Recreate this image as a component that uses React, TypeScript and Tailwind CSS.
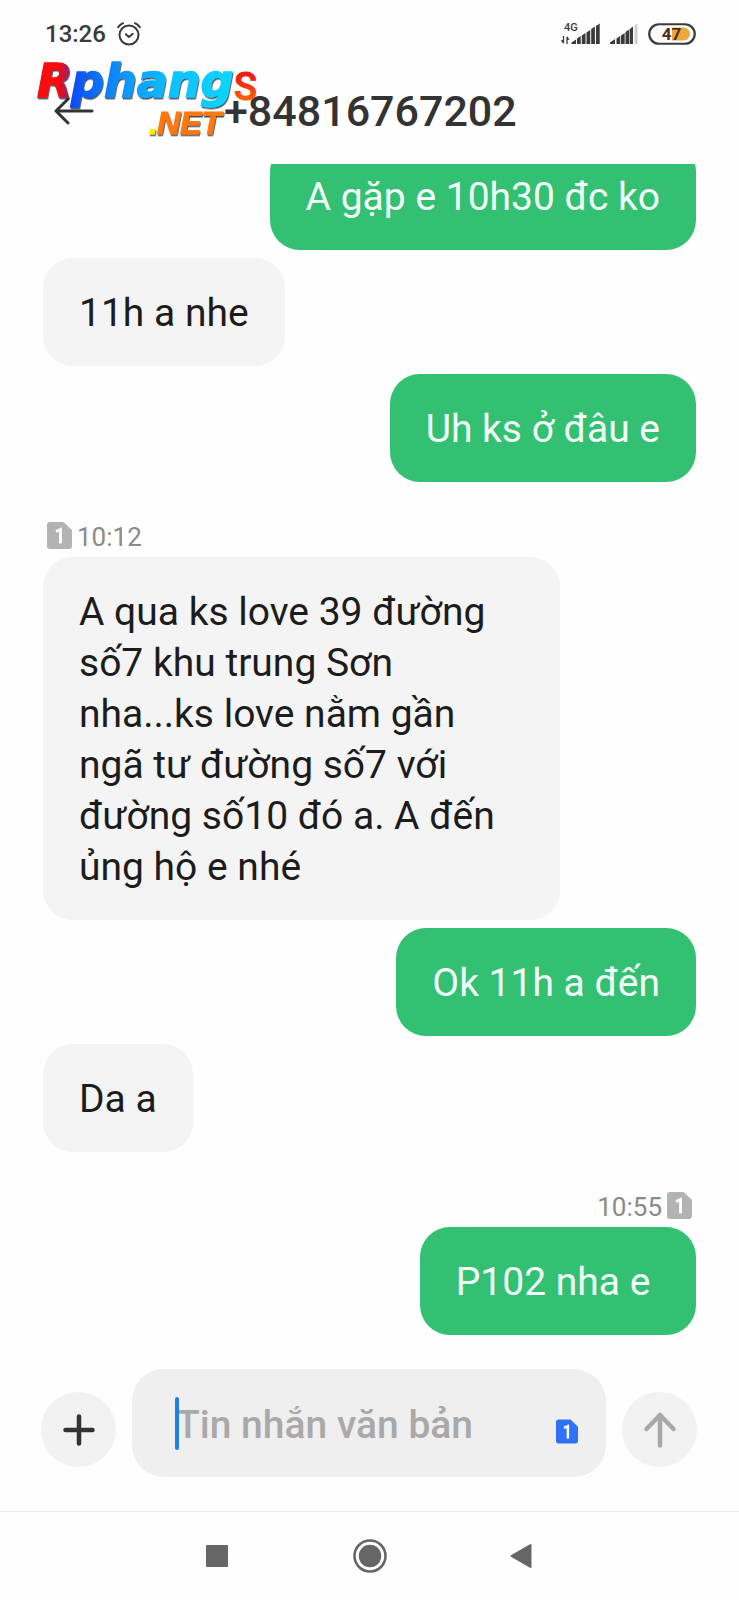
import type { ReactNode } from "react";

type Message = {
  id: number;
  from: "me" | "them";
  text: string;
  time?: string;
};

const messages: Message[] = [
  { id: 1, from: "me", text: "A gặp e 10h30 đc ko" },
  { id: 2, from: "them", text: "11h a nhe" },
  { id: 3, from: "me", text: "Uh ks ở đâu e" },
  {
    id: 4,
    from: "them",
    time: "10:12",
    text: "A qua ks love 39 đường số7 khu trung Sơn nha...ks love nằm gần ngã tư đường số7 với đường số10 đó a. A đến ủng hộ e nhé",
  },
  { id: 5, from: "me", text: "Ok 11h a đến" },
  { id: 6, from: "them", text: "Da a" },
  { id: 7, from: "me", time: "10:55", text: "P102 nha e\u00a0" },
];

function AlarmIcon() {
  return (
    <svg viewBox="0 0 24 24" className="h-6 w-6" fill="none" stroke="#3a3a3a" strokeWidth="2" strokeLinecap="round" strokeLinejoin="round" aria-hidden="true">
      <circle cx="12" cy="13" r="9.5" />
      <path d="M8.8 12.2 12 15l3.8-3.2" />
      <path d="M1.2 5.2Q3.2 2.6 6 1.2M22.8 5.2Q20.8 2.6 18 1.2" />
    </svg>
  );
}

function DataSignal() {
  return (
    <svg viewBox="0 0 40 24" className="h-6 w-10" fill="#3a3a3a" aria-label="4G">
      <text x="4" y="9" fontFamily="Roboto, sans-serif" fontSize="11" fontWeight="500">4G</text>
      <path d="M3.5 14v7M7 22v-7" stroke="#3a3a3a" strokeWidth="1.3" />
      <path d="M.8 18.2 3.5 22V18zM9.6 17.8 7 14v4z" />
      <path d="M11.5 20.5 16 17.500V22H11.500zM17 16.500l3.700-2.500v8h-3.700zM21.800 13.500l3.700-2.500v11h-3.700zM26.500 10.500l3.700-2.500v14h-3.700zM31.200 7l3.700-2.500v17.500h-3.700zM36 4l3.700-2.500v20.500h-3.700z" />
    </svg>
  );
}

function PlainSignal() {
  return (
    <svg viewBox="0 0 28 24" className="h-6 w-7" fill="#3a3a3a" aria-hidden="true">
      <path d="M0 20.500 5 17V22H0zM6.500 16.500l3.700-2.500v8h-3.700zM11 13.500l3.700-2.500v11h-3.700zM15.500 10l3.700-2.500v14.500h-3.700zM19.800 7l3.200-2.500v17.500h-3.200z" />
      <path d="M24.500 3.500l3-2.500v21h-3z" fill="#cfcfcf" />
    </svg>
  );
}

function Battery() {
  return (
    <svg viewBox="0 0 48 22" className="h-[22px] w-12" aria-label="47%">
      <rect x="1.250" y="1.250" width="45.500" height="19.500" rx="9.750" fill="#fff" stroke="#3a3a3a" strokeWidth="2.200" />
      <path d="M24 4.500h11.500a6.500 6.500 0 0 1 0 13H24z" fill="#f0a63a" />
      <text x="23.500" y="17" textAnchor="middle" fontFamily="Roboto, sans-serif" fontSize="17" fontWeight="700" fill="#4a3018">47</text>
    </svg>
  );
}

function SimIcon({ className, color }: { className: string; color: string }) {
  return (
    <svg viewBox="0 0 25 27" className={className} aria-hidden="true">
      <path d="M3 0h13.500L25 8v16a3 3 0 0 1-3 3H3a3 3 0 0 1-3-3V3a3 3 0 0 1 3-3z" fill={color} />
      <path d="M9 9.500 13.500 7.500V21.500" fill="none" stroke="#fff" strokeWidth="2.800" />
    </svg>
  );
}

function Watermark() {
  return (
    <svg viewBox="0 0 230 92" className="pointer-events-none absolute -top-2 left-9 h-[92px] w-[230px] overflow-visible" role="img" aria-label="RphangS.NET">
      <defs>
        <linearGradient id="wm-r" x1="0" x2="1" y1="0" y2="0">
          <stop offset="0.600" stopColor="#f80808" />
          <stop offset="1" stopColor="#7a2a90" />
        </linearGradient>
        <linearGradient id="wm-name" x1="0" x2="1" y1="0" y2="0">
          <stop offset="0" stopColor="#0b48f5" />
          <stop offset="0.300" stopColor="#1190fb" />
          <stop offset="0.650" stopColor="#08c4fb" />
          <stop offset="1" stopColor="#08d4ff" />
        </linearGradient>
        <linearGradient id="wm-s" x1="0" x2="0" y1="0" y2="1">
          <stop offset="0.300" stopColor="#f21c10" />
          <stop offset="0.850" stopColor="#ff6a08" />
        </linearGradient>
        <filter id="wm-shadow" x="-5%" y="-10%" width="115%" height="125%">
          <feDropShadow dx="0.800" dy="1.500" stdDeviation="0.400" floodColor="#10202c" floodOpacity="0.800" />
        </filter>
      </defs>
      <g filter="url(#wm-shadow)" fontStyle="italic" fontWeight="700">
        <g fontFamily="'DejaVu Sans', sans-serif">
          <text x="1" y="39" fontSize="46" fill="url(#wm-r)" stroke="url(#wm-r)" strokeWidth="1.400">R</text>
          <text x="35" y="39" fontSize="46" fill="url(#wm-name)" stroke="url(#wm-name)" strokeWidth="1.400">phang</text>
        </g>
        <g fontFamily="'Liberation Sans', sans-serif" fontSize="32">
          <text x="113" y="76" fill="#ffe80a" stroke="#ffe80a">.</text>
          <text x="121" y="76" fill="#ff780a" stroke="#ff780a">NET</text>
        </g>
      </g>
      <text x="198" y="42" fontFamily="Roboto, sans-serif" fontSize="38" fontWeight="500" fill="url(#wm-s)" stroke="url(#wm-s)">S</text>
    </svg>
  );
}

function StatusBar() {
  return (
    <div className="flex h-[66px] items-center justify-between pl-[45px] pr-[43px] pt-0.5">
      <div className="flex items-center gap-[11px] text-[#3a3a3a]">
        <span className="text-2xl font-medium">13:26</span>
        <AlarmIcon />
      </div>
      <div className="flex items-center gap-[10px]">
        <DataSignal />
        <PlainSignal />
        <Battery />
      </div>
    </div>
  );
}

function Header() {
  return (
    <header className="relative flex h-[98px] items-center pb-2 pl-[54px]">
      <button type="button" aria-label="Back" className="mr-[130px] w-10">
        <svg viewBox="0 0 40 28" className="h-7 w-10" fill="none" stroke="#333" strokeWidth="3" strokeLinecap="round" strokeLinejoin="round" aria-hidden="true">
          <path d="M38 14H2M14 2 2 14l12 12" />
        </svg>
      </button>
      <h1 className="text-[43px] font-medium leading-[52px] text-[#333]">+84816767202</h1>
      <Watermark />
    </header>
  );
}

function Bubble({ message }: { message: Message }) {
  const mine = message.from === "me";
  return (
    <li className={mine ? "flex flex-col items-end" : "flex flex-col items-start"}>
      {message.time && (
        <div className={mine ? "mt-8 flex flex-row-reverse gap-[5px] pb-[5px] pr-1" : "mt-8 flex gap-[5px] pb-[5px] pl-1"}>
          <SimIcon className="h-[27px] w-[25px]" color="#b3b3b3" />
          <time className="text-[26px] leading-[30px] text-[#8a8a8a]">{message.time}</time>
        </div>
      )}
      <p
        className={
          mine
            ? "max-w-[517px] rounded-[30px] bg-[#34c072] px-9 pb-[27px] pt-[30px] text-[39px] leading-[51px] text-[#f2fff8]"
            : "max-w-[517px] rounded-[30px] bg-[#f4f4f4] px-9 pb-[27px] pt-[30px] text-[39px] leading-[51px] text-[#1c1c1c]"
        }
      >
        {message.text}
      </p>
    </li>
  );
}

function RoundButton({ label, children }: { label: string; children: ReactNode }) {
  return (
    <button type="button" aria-label={label} className="mb-[10px] flex size-[75px] shrink-0 items-center justify-center rounded-full bg-[#f2f2f2]">
      {children}
    </button>
  );
}

function Composer() {
  return (
    <form className="flex items-end gap-4 pb-[34px] pl-[41px] pr-[42px] pt-[34px]" onSubmit={(e) => e.preventDefault()}>
      <RoundButton label="Add">
        <svg viewBox="0 0 32 32" className="size-8" stroke="#333" strokeWidth="4.500" strokeLinecap="round" aria-hidden="true">
          <path d="M16 2.500v27M2.500 16h27" />
        </svg>
      </RoundButton>
      <div className="relative flex h-[108px] min-w-0 flex-1 items-center rounded-[32px] bg-[#efefef] pl-11 pr-7 pt-1">
        <input
          type="text"
          aria-label="Tin nhắn văn bản"
          placeholder="Tin nhắn văn bản"
          className="h-[52px] min-w-0 flex-1 bg-transparent text-[39px] font-medium text-[#333] outline-none placeholder:text-[#a9a9a9]"
        />
        <span className="absolute left-[43px] top-7 h-[53px] w-1 rounded-full bg-[#1f7fe0]" />
        <SimIcon className="mt-3 h-[25px] w-[22px]" color="#2f72fa" />
      </div>
      <RoundButton label="Send">
        <svg viewBox="0 0 32 36" className="h-9 w-8" fill="none" stroke="#a9a9a9" strokeWidth="4.500" strokeLinecap="round" strokeLinejoin="round" aria-hidden="true">
          <path d="M16 33.500V3M2.500 17 16 3l13.500 14" />
        </svg>
      </RoundButton>
    </form>
  );
}

function NavBar() {
  return (
    <nav className="flex h-[89px] items-center justify-center border-t border-[#e8e8e8]">
      <button type="button" aria-label="Recent apps" className="flex w-[151px] justify-center">
        <span className="mr-1 size-[22px] rounded-[1px] bg-[#666]" />
      </button>
      <button type="button" aria-label="Home" className="flex w-[151px] justify-center">
        <svg viewBox="0 0 34 34" className="size-[34px]" aria-hidden="true">
          <circle cx="17" cy="17" r="15.500" fill="none" stroke="#666" strokeWidth="2.600" />
          <circle cx="17" cy="17" r="11.200" fill="#666" />
        </svg>
      </button>
      <button type="button" aria-label="Back" className="flex w-[151px] justify-center">
        <svg viewBox="0 0 22 26" className="h-[26px] w-[22px]" fill="#666" stroke="#666" strokeWidth="2" strokeLinejoin="round" aria-hidden="true">
          <path d="M1.500 13 20.500 2v22z" />
        </svg>
      </button>
    </nav>
  );
}

export default function App() {
  return (
    <div className="flex min-h-screen flex-col bg-[#fefefe] font-[Roboto,sans-serif]">
      <StatusBar />
      <Header />
      <main className="flex-1 overflow-hidden px-[43px]">
        <ul className="-mt-[22px] flex flex-col gap-2">
          {messages.map((m) => (
            <Bubble key={m.id} message={m} />
          ))}
        </ul>
      </main>
      <Composer />
      <NavBar />
    </div>
  );
}
